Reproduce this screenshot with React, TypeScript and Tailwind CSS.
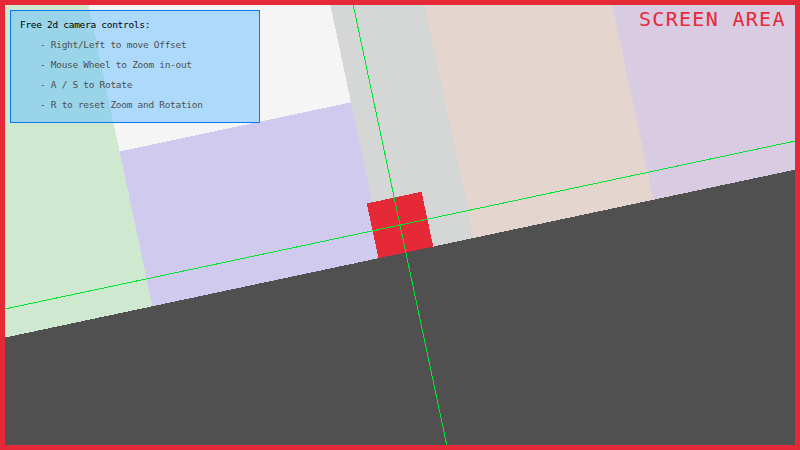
import React from "react";

const buildings = [
  { x: 40, y: -200, w: 195, h: 520, c: "#cfe9d0" },
  { x: 235, y: 207, w: 169, h: 113, c: "#d0cbee" },
  { x: 404, y: -200, w: 66, h: 520, c: "#d5d7d6" },
  { x: 470, y: -200, w: 131, h: 520, c: "#e4d6ce" },
  { x: 601, y: -200, w: 260, h: 520, c: "#d8cbe2" },
];

function Scene() {
  return (
    <svg
      className="absolute inset-0"
      width={800}
      height={450}
      viewBox="0 0 800 450"
      shapeRendering="crispEdges"
    >
      <rect x={0} y={0} width={800} height={450} fill="#f5f5f5" />
      <g transform="translate(400 225) rotate(-12) scale(1.4) translate(-420 -300)">
        <rect x={-6000} y={320} width={13000} height={8000} fill="#505050" />
        {buildings.map((b, i) => (
          <rect key={i} x={b.x} y={b.y} width={b.w} height={b.h} fill={b.c} />
        ))}
        <rect x={400} y={280} width={40} height={40} fill="#e62937" />
      </g>
      <line x1={-578.1} y1={432.9} x2={1378.1} y2={17.1} stroke="#00e430" strokeWidth={1} />
      <line x1={192.1} y1={-753.1} x2={607.9} y2={1203.1} stroke="#00e430" strokeWidth={1} />
    </svg>
  );
}

export default function App() {
  const mono = { fontFamily: '"DejaVu Sans Mono", "Liberation Mono", monospace' };
  return (
    <div className="relative w-[800px] h-[450px] overflow-hidden bg-[#f5f5f5]" style={mono}>
      <Scene />
      <div className="absolute inset-0 border-[5px] border-[#e62937] pointer-events-none" />
      <div className="absolute left-[10px] top-[10px] w-[250px] h-[113px] border border-[#0079f1] bg-[#66bfff]/50 pl-[9px] pt-[9px] flex flex-col">
        <div className="h-5 text-[9.5px] leading-[9.5px] tracking-[-0.3px] text-black whitespace-nowrap">
          Free 2d camera controls:
        </div>
        {[
          "- Right/Left to move Offset",
          "- Mouse Wheel to Zoom in-out",
          "- A / S to Rotate",
          "- R to reset Zoom and Rotation",
        ].map((t) => (
          <div
            key={t}
            className="h-5 pl-5 text-[9.5px] leading-[9.5px] tracking-[-0.3px] text-[#505050] whitespace-nowrap"
          >
            {t}
          </div>
        ))}
      </div>
      <div className="absolute left-[639px] top-[9px] text-[20px] leading-[20px] tracking-[1.3px] text-[#e62937] whitespace-nowrap">
        SCREEN AREA
      </div>
    </div>
  );
}
